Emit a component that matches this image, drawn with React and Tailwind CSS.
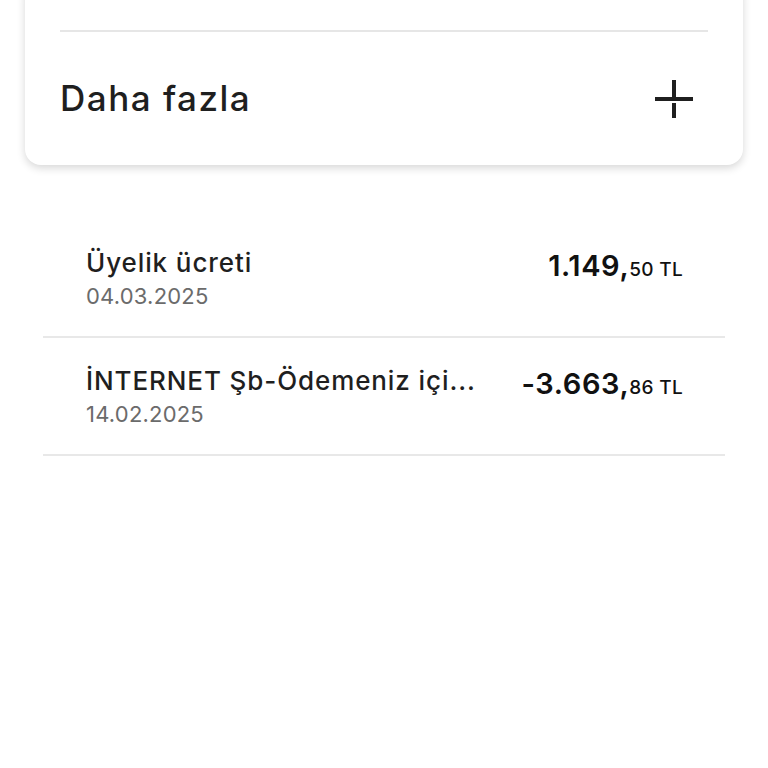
import React from "react";

const rows = [
  { title: "Üyelik ücreti", date: "04.03.2025", whole: "1.149,", cents: "50" },
  { title: "İNTERNET Şb-Ödemeniz içi...", date: "14.02.2025", whole: "-3.663,", cents: "86" },
];

function PlusIcon() {
  return (
    <svg width="40" height="40" viewBox="0 0 40 40" fill="none">
      <path d="M20 1v18M20 24v15M1 20h38" stroke="#1f1f1f" strokeWidth="4" />
    </svg>
  );
}

export default function App() {
  return (
    <div
      className="w-[768px] h-[768px] overflow-hidden bg-white"
      style={{ fontFamily: "Inter, 'Noto Sans', sans-serif" }}
    >
      <div className="mx-[25px] -mt-5 bg-white rounded-2xl shadow-[0_3px_8px_rgba(0,0,0,0.16)] px-[35px] pt-[50px]">
        <div className="h-[2px] bg-[#e6e6e6]" />
        <div className="h-[133px] flex items-center justify-between">
          <span className="text-[35px] font-medium text-[#1f1f1f] tracking-[1.5px]">Daha fazla</span>
          <div className="mr-[14px]">
            <PlusIcon />
          </div>
        </div>
      </div>

      <div className="mx-[43px] mt-[55px]">
        {rows.map((r) => (
          <div key={r.date} className="h-[118px] border-b-2 border-[#e8e8e8] pl-[43px] pr-[42px] flex items-center justify-between">
            <div className="min-w-0 flex flex-col pt-[4px]">
              <span className="text-[26px] leading-[32px] font-medium text-[#1f1f1f] tracking-[0.9px] whitespace-nowrap">{r.title}</span>
              <span className="text-[22px] leading-[34px] text-[#6b6b6b] tracking-[0.2px]">{r.date}</span>
            </div>
            <div className="self-start mt-[24px] whitespace-nowrap text-[#111]">
              <span className="text-[29px] font-semibold tracking-[0.6px]">{r.whole}</span>
              <span className="text-[19px] font-medium tracking-[0.3px]">{r.cents} TL</span>
            </div>
          </div>
        ))}
      </div>
    </div>
  );
}
